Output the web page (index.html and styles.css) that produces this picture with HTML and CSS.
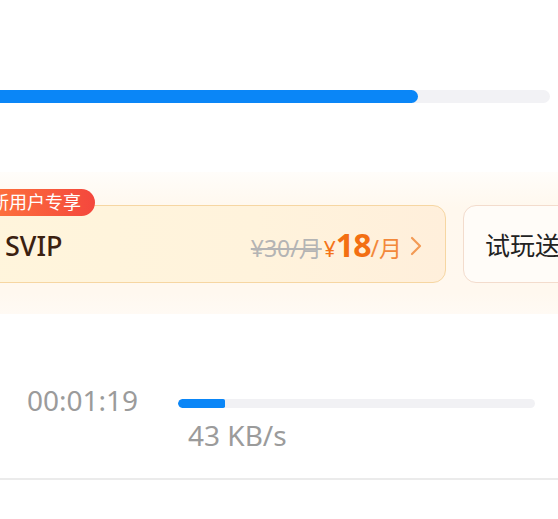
FILE: index.html
```html
<!DOCTYPE html>
<html lang="zh-CN">
<head>
    <meta charset="UTF-8">
    <meta name="viewport" content="width=device-width, initial-scale=1.0">
    <title>下载任务</title>
    <link rel="stylesheet" href="styles.css">
</head>
<body>

    <!-- Overall progress -->
    <div class="top-progress">
        <div class="top-progress-fill"></div>
    </div>

    <!-- Promo band: SVIP offer and trial card -->
    <div class="promo-band">
        <div class="promo-row">
            <div class="offer-card">
                <span class="offer-badge">新用户专享</span>
                <span class="offer-name">SVIP</span>
                <div class="offer-price">
                    <span class="price-old">¥30/月</span>
                    <span class="price-yen">¥</span><span class="price-num">18</span><span class="price-unit">/月</span>
                    <svg class="price-arrow" width="12" height="20" viewBox="0 0 12 20">
                        <path d="M2 2 L10 10 L2 18" fill="none" stroke="#f39a55" stroke-width="2.2" stroke-linecap="round" stroke-linejoin="round"/>
                    </svg>
                </div>
            </div>
            <div class="trial-card">试玩送1天SVIP</div>
        </div>
    </div>

    <!-- Current task -->
    <div class="task">
        <div class="task-time">00:01:19</div>
        <div class="task-info">
            <div class="task-bar">
                <div class="task-bar-fill"></div>
            </div>
            <div class="task-speed">43 KB/s</div>
        </div>
    </div>

</body>
</html>
```

FILE: styles.css
```css
body {
    font-family: "Noto Sans", "Noto Sans CJK SC", sans-serif;
    background-color: #ffffff;
    margin: 0;
    padding: 0;
    overflow: hidden;
    color: #333;
}
/* Overall progress */
.top-progress {
    margin-top: 90px;
    margin-left: -20px;
    width: 570px;
    height: 13px;
    border-radius: 7px;
    background-color: #f2f2f5;
    overflow: hidden;
}
.top-progress-fill {
    width: 438px;
    height: 100%;
    border-radius: 7px;
    background-color: #0a86f7;
}
/* Promo band */
.promo-band {
    margin-top: 69px;
    height: 142px;
    padding-top: 33px;
    box-sizing: border-box;
    background: linear-gradient(180deg, #fffdfa 0%, #fff8ee 25%, #fff8ef 85%, #fffaf4 100%);
}
.promo-row {
    display: flex;
    gap: 17px;
    margin-left: -30px;
    white-space: nowrap;
}
.offer-card {
    position: relative;
    flex: none;
    width: 476px;
    height: 78px;
    box-sizing: border-box;
    padding: 0 23px 0 34px;
    display: flex;
    align-items: center;
    justify-content: space-between;
    border: 1.5px solid #f6d6a2;
    border-radius: 13px;
    background: linear-gradient(90deg, #fff5dc 0%, #fff3dc 60%, #ffefdb 100%);
}
.offer-badge {
    position: absolute;
    top: -17px;
    left: -2px;
    height: 27px;
    line-height: 27px;
    padding: 0 14px 0 22px;
    font-size: 18px;
    color: #fff;
    border-radius: 0 14px 14px 0;
    background: linear-gradient(90deg, #ff7c3c 0%, #f4473d 100%);
}
.offer-name {
    font-size: 27px;
    font-weight: 500;
    color: #3b2110;
    padding-top: 2px;
}
.offer-price {
    display: flex;
    align-items: baseline;
}
.price-old {
    font-size: 23px;
    color: #b4b4b4;
    text-decoration: line-through;
    margin-right: 2px;
}
.price-yen {
    font-size: 21px;
    color: #f57418;
}
.price-num {
    font-size: 32px;
    font-weight: 700;
    color: #f36f12;
    letter-spacing: -1px;
}
.price-unit {
    font-size: 23px;
    color: #f3883a;
}
.price-arrow {
    margin-left: 8px;
    align-self: center;
    margin-top: 4px;
}
.trial-card {
    flex: none;
    width: 220px;
    height: 78px;
    box-sizing: border-box;
    padding-left: 21px;
    display: flex;
    align-items: center;
    font-size: 25px;
    color: #222;
    border: 1.5px solid #f3dccd;
    border-radius: 13px;
    background-color: #fffcf8;
}
/* Current task */
.task {
    display: flex;
    align-items: flex-start;
    padding: 68px 0 0 27px;
    border-bottom: 2px solid #ebebeb;
    height: 96px;
}
.task-time {
    width: 151px;
    font-size: 28px;
    line-height: 36px;
    color: #9b9b9b;
}
.task-info {
    padding-top: 17px;
}
.task-bar {
    width: 357px;
    height: 9px;
    border-radius: 5px;
    background-color: #f1f1f4;
    overflow: hidden;
}
.task-bar-fill {
    width: 47px;
    height: 100%;
    border-radius: 5px 2px 2px 5px;
    background-color: #0a86f7;
}
.task-speed {
    margin: 10px 0 0 10px;
    font-size: 28px;
    line-height: 34px;
    color: #9b9b9b;
}
```
